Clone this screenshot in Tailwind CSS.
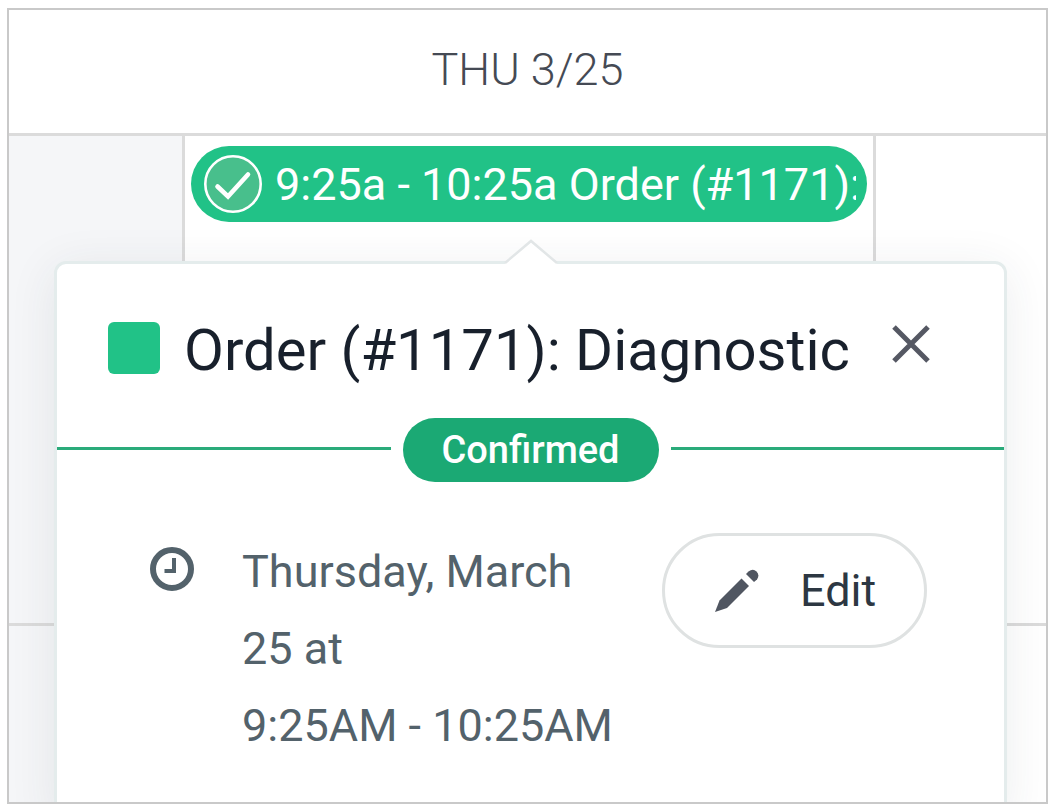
<!DOCTYPE html>
<html lang="en">
<head>
<meta charset="utf-8">
<meta name="viewport" content="width=device-width, initial-scale=1">
<title>Calendar – Thu 3/25</title>
<script src="https://cdn.jsdelivr.net/npm/@tailwindcss/browser@4"></script>
</head>
<body class="bg-white font-['Roboto',sans-serif]">
<main class="flex h-screen flex-col pt-2 pr-[6px] pb-2 pl-[7px]">
  <div class="flex flex-1 flex-col overflow-hidden border-2 border-[#c9c9c9]">
    <header class="flex h-[126px] shrink-0 items-center justify-center border-b-3 border-[#dbdbdb] pb-1">
      <h1 class="text-[45px] leading-[56px] font-light text-[#454a54]">THU 3/25</h1>
    </header>

    <div class="relative grid flex-1 grid-cols-[176px_minmax(0,1fr)_170px] grid-rows-[490px_1fr]">
      <div class="border-r-3 border-b-3 border-[#dbdbdb] bg-[#f5f6f8]"></div>
      <div class="min-w-0 border-r-3 border-b-3 border-[#dbdbdb] px-[6px] pt-[10px]">
        <button type="button" class="flex h-[76px] w-full items-center rounded-full bg-[#21c287] pr-[11px] pl-[13px] text-left text-white">
          <svg class="mr-[13px] size-[58px] shrink-0" viewBox="0 0 58 58" fill="none" aria-hidden="true">
            <circle cx="29" cy="29" r="27.7" fill="#48bf8c" stroke="#fff" stroke-width="2.6"/>
            <path d="M13.500 31.500L24 41.500L44 19.500" stroke="#fff" stroke-width="4.600" stroke-linecap="round" stroke-linejoin="miter"/>
          </svg>
          <span class="min-w-0 flex-1 overflow-hidden pt-0.5 text-[45px] leading-[56px] whitespace-nowrap">9:25a - 10:25a Order (#1171):</span>
        </button>
      </div>
      <div class="border-b-3 border-[#dbdbdb]"></div>
      <div class="border-r-3 border-[#dbdbdb] bg-[#f5f6f8]"></div>
      <div class="border-r-3 border-[#dbdbdb]"></div>
      <div></div>

      <section role="dialog" aria-labelledby="popover-title" class="absolute top-[125px] right-[39px] -bottom-4 left-[45px] rounded-t-xl border-3 border-[#e4ecec] bg-white shadow-[0_8px_48px_rgba(40,60,70,0.09)]">
        <svg class="absolute -top-[25px] left-1/2 h-[26px] w-[54px] -translate-x-1/2" viewBox="0 0 54 26" aria-hidden="true">
          <path d="M0 26L2 23.500L27 2L52 23.500L54 26Z" fill="#fff"/>
          <path d="M1 24L27 2L53 24" fill="none" stroke="#e2e6e7" stroke-width="2.500"/>
        </svg>

        <div class="flex items-start pt-[50px] pr-[73px] pl-[51px]">
          <span class="mt-2 size-[52px] shrink-0 rounded-md bg-[#21c287]"></span>
          <h2 id="popover-title" class="ml-6 flex-1 text-[58px] leading-[72px] whitespace-nowrap text-[#18202c]">Order (#1171): Diagnostic</h2>
          <button type="button" aria-label="Close" class="mt-[10px] shrink-0 text-[#555863]">
            <svg class="size-10" viewBox="0 0 40 40" fill="none" stroke="currentColor" stroke-width="5" aria-hidden="true"><path d="M3 3L37 37M37 3L3 37"/></svg>
          </button>
        </div>

        <div class="mt-8 flex items-center gap-3">
          <span class="mb-1 h-[3px] flex-1 bg-[#2aab7a]"></span>
          <span class="flex h-16 w-64 items-center justify-center rounded-full bg-[#1ba974] text-[38px] leading-[48px] font-medium text-white">Confirmed</span>
          <span class="mb-1 h-[3px] flex-1 bg-[#2aab7a]"></span>
        </div>

        <div class="flex items-start pt-[51px] pr-[77px] pl-[93px]">
          <svg class="mt-[14px] size-11 shrink-0" viewBox="0 0 44 44" fill="none" stroke="#53626b" aria-hidden="true">
            <circle cx="22" cy="22" r="19" stroke-width="6"/>
            <path d="M24 11V24H14.500" stroke-width="4"/>
          </svg>
          <p class="ml-12 w-[400px] text-[45px] leading-[77px] text-[#53626b]">Thursday, March<br>25 at<br>9:25AM - 10:25AM</p>
          <button type="button" class="ml-auto flex h-[115px] w-[265px] shrink-0 items-center rounded-full border-3 border-[#dfe2e2] pl-[50px] text-[45px] leading-[56px] text-[#2d3742]">
            <svg class="mr-[41px] size-11 shrink-0" viewBox="0 0 44 44" fill="#505661" aria-hidden="true">
              <path d="M0 43L4.500 31.500L26.500 9.500L34 17L12 39Z"/>
              <path d="M31 5L33.500 2.500Q38 -1 41.500 2.500Q45 6 42 10.500L39 13Z"/>
            </svg>
            Edit
          </button>
        </div>
      </section>
    </div>
  </div>
</main>
</body>
</html>
